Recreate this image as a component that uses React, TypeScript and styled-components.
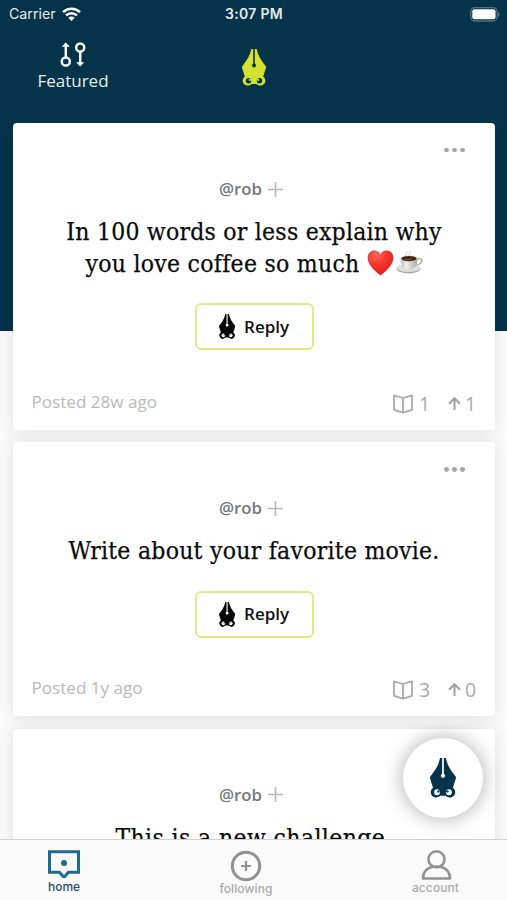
import React from 'react';
import styled, { createGlobalStyle } from 'styled-components';

const navy = '#053349';
const lime = '#d4e22f';
const sans = '"Open Sans", "Noto Sans", sans-serif';
const system = 'Inter, "Liberation Sans", sans-serif';
const slab = '"Roboto Slab", "DejaVu Serif Condensed", "DejaVu Serif", serif';

const GlobalStyle = createGlobalStyle`
  * { box-sizing: border-box; }
  body { margin: 0; background: #fafafa; }
  button { font: inherit; padding: 0; cursor: pointer; }
  svg { display: block; flex: none; }
`;

const Screen = styled.div`
  width: 507px;
  height: 900px;
  display: flex;
  flex-direction: column;
  overflow: hidden;
  position: relative;
  background: linear-gradient(${navy} 0 331px, #fbfbfb 331px);
`;

const StatusBar = styled.div`
  height: 28px;
  flex: none;
  display: grid;
  grid-template-columns: 1fr auto 1fr;
  align-items: center;
  padding: 0 7px 0 9px;
  color: #e4ebee;
  font: 400 14.2px/28px ${system};
`;

const Carrier = styled.div`
  display: flex;
  align-items: center;
  gap: 6px;
`;

const Clock = styled.div`
  font-weight: 600;
  font-size: 14px;
  letter-spacing: 0.3px;
  margin-left: -1px;
`;

const Battery = styled.svg`
  justify-self: end;
`;

const Header = styled.header`
  height: 95px;
  flex: none;
  display: grid;
  grid-template-columns: 146px 1fr 146px;
  align-items: start;
`;

const Filter = styled.button`
  display: flex;
  flex-direction: column;
  align-items: center;
  gap: 2px;
  margin-top: 14px;
  border: 0;
  background: none;
  color: #e6edf0;
  font: 400 17px/24px ${sans};
`;

const Logo = styled.div`
  display: flex;
  justify-content: center;
  padding-top: 21px;
  margin-left: 1px;
`;

const Feed = styled.main`
  flex: 1;
  min-height: 0;
  overflow: hidden;
  display: flex;
  flex-direction: column;
  gap: 12.4px;
  padding: 0 12px 0 13px;
`;

const CardBox = styled.article<{ $height: number }>`
  height: ${(p) => p.$height}px;
  flex: none;
  display: flex;
  flex-direction: column;
  align-items: center;
  background: #fff;
  border-radius: 4px;
  box-shadow: 0 0 18px rgba(0, 0, 0, 0.11);
`;

const More = styled.div`
  align-self: flex-end;
  display: flex;
  gap: 3.2px;
  height: 54px;
  padding: 24.5px 30px 0 0;
`;

const Dot = styled.i`
  width: 4.8px;
  height: 4.8px;
  border-radius: 50%;
  background: #a6a6a6;
`;

const Author = styled.div`
  display: flex;
  align-items: center;
  gap: 6px;
  height: 24px;
  margin-left: -6px;
  color: #777;
  font: 600 16.8px/24px ${sans};
`;

const Prompt = styled.h2`
  margin: 15px 0 0;
  color: #0b0b0b;
  font: 400 24.5px/31.5px ${slab};
  -webkit-text-stroke: 0.25px #0b0b0b;
  text-align: center;
  white-space: nowrap;
`;

const PromptLine = styled.span<{ $tracking: number }>`
  display: flex;
  justify-content: center;
  align-items: center;
  height: 31.5px;
  letter-spacing: ${(p) => p.$tracking}px;
`;

const Emojis = styled.span`
  display: inline-flex;
  gap: 2px;
  margin-left: 7px;
`;

const Reply = styled.button`
  display: flex;
  align-items: center;
  justify-content: center;
  gap: 9px;
  width: 119px;
  height: 47px;
  flex: none;
  margin-top: 24px;
  border: 2px solid #dfe98a;
  border-radius: 6px;
  background: #fff;
  color: #111;
  font: 600 17px/24px ${sans};
`;

const Footer = styled.footer`
  width: 100%;
  margin-top: auto;
  height: 54px;
  display: flex;
  justify-content: space-between;
  padding: 13px 19px 0 18.5px;
  color: #b9b9b9;
  font: 400 17.1px/26px ${sans};
`;

const Stats = styled.div`
  display: flex;
  align-items: center;
  height: 30px;
  font-size: 19.5px;
  color: #ababab;
`;

const Stat = styled.span<{ $gap: number; $width: number }>`
  display: flex;
  align-items: center;
  gap: ${(p) => p.$gap}px;
  width: ${(p) => p.$width}px;
`;

const Compose = styled.button`
  position: absolute;
  right: 24px;
  bottom: 82px;
  width: 80px;
  height: 80px;
  display: flex;
  align-items: center;
  justify-content: center;
  border: 0;
  border-radius: 50%;
  background: #fff;
  box-shadow: 0 0 20px rgba(0, 0, 0, 0.33);
`;

const TabBar = styled.nav`
  height: 61px;
  flex: none;
  display: grid;
  grid-template-columns: 128px 236px 1fr;
  border-top: 1.5px solid #d0d0d0;
  background: #fafafa;
  z-index: 1;
`;

const Tab = styled.a<{ $active?: boolean }>`
  display: flex;
  flex-direction: column;
  align-items: center;
  padding-top: ${(p) => (p.$active ? 10 : 10)}px;
  gap: ${(p) => (p.$active ? 0.5 : 0)}px;
  color: ${(p) => (p.$active ? '#254f66' : '#aaa')};
  font: 500 12px/14px ${system};
  letter-spacing: ${(p) => (p.$active ? -0.1 : 0.1)}px;
`;

const PenBear = ({ height, color, hole }: { height: number; color: string; hole: string }) => (
  <svg width={(height * 24) / 37} height={height} viewBox="0 0 24 37">
    <path
      fill={color}
      d="M9.3 0h5.400c1.200 6.500 4.200 11 9 17.200c.4.5.4 1.200.1 2L21.200 27.500a4.900 4.900 0 0 1-5.700 8.200L14.300 34.900H9.700L8.500 35.700a4.900 4.900 0 0 1-5.700-8.200L.2 19.200c-.3-.8-.3-1.500.1-2C5.100 11 8.100 6.500 9.300 0z"
    />
    <path stroke={hole} strokeWidth="1.600" d="M12 0v16" />
    <circle cx="12" cy="16.500" r="2" fill={hole} />
    <circle cx="6.500" cy="31.700" r="2.700" fill={hole} />
    <circle cx="17.500" cy="31.700" r="2.700" fill={hole} />
    <circle cx="7.800" cy="30.900" r="1.100" fill={color} />
    <circle cx="16.200" cy="30.900" r="1.100" fill={color} />
  </svg>
);

const Plus = () => (
  <svg width="15" height="15" viewBox="0 0 15 15" stroke="#b8b8b8" strokeWidth="1.600">
    <path d="M7.500 0v15M0 7.500h15" />
  </svg>
);

const Book = () => (
  <svg width="20" height="20" viewBox="0 0 20 20" fill="none" stroke="#aaa" strokeWidth="1.800" strokeLinejoin="round">
    <path d="M1 1.300L10 4l9-2.700v14.500L10 18.600l-9-2.800zM10 4v14.600" />
  </svg>
);

const ArrowUp = () => (
  <svg width="13" height="14" viewBox="0 0 13 14" fill="none" stroke="#a4a4a4" strokeWidth="2.100">
    <path d="M6.500 13V1.500M1 6.700L6.500 1.200 12 6.700" />
  </svg>
);

const Heart = () => (
  <svg width="27" height="26" viewBox="0 0 27 26">
    <defs>
      <radialGradient id="heart" cx=".35" cy=".2" r=".85">
        <stop offset="0" stopColor="#ff6a5c" />
        <stop offset=".45" stopColor="#f5352e" />
        <stop offset="1" stopColor="#d91a1c" />
      </radialGradient>
    </defs>
    <path
      fill="url(#heart)"
      d="M13.500 4.200C12.300 1.700 9.800.5 7.200.5 3.300.5.700 3.600.700 7.800c0 7 6.300 12.700 12.800 17.700C20 20.500 26.300 14.800 26.300 7.800c0-4.200-2.600-7.300-6.500-7.300-2.600 0-5.100 1.200-6.300 3.700z"
    />
  </svg>
);

const Coffee = () => (
  <svg width="27" height="26" viewBox="0 0 27 26">
    <defs>
      <linearGradient id="cup" x1="0" x2="1">
        <stop offset="0" stopColor="#bebbb4" />
        <stop offset=".35" stopColor="#f1efeb" />
        <stop offset="1" stopColor="#aaa8a3" />
      </linearGradient>
    </defs>
    <path d="M10 6c-2-2 2-2.500 1-5M13.500 5.500c-2-2 2.500-2.500.5-5" stroke="#e4e4e4" strokeWidth="1.600" fill="none" />
    <ellipse cx="12.500" cy="18.800" rx="12" ry="4.700" fill="#a9a7a2" />
    <ellipse cx="12.500" cy="17.900" rx="12" ry="4.200" fill="#dedcd6" />
    <path d="M20 9.500c4.500-1.800 6.500-.5 5.700 2s-4 3.500-7.700 3.500" stroke="#bbb8b0" strokeWidth="1.700" fill="none" />
    <path d="M4.500 8.500c0 6.500 3 11.200 8.500 11.200s8.500-4.700 8.500-11.200z" fill="url(#cup)" />
    <ellipse cx="13" cy="8.500" rx="8.500" ry="3.300" fill="#dcd8d0" />
    <ellipse cx="13" cy="8.700" rx="7.600" ry="2.600" fill="#42271a" />
    <ellipse cx="12.300" cy="9.600" rx="3.800" ry=".8" fill="#735039" />
  </svg>
);

type Challenge = {
  height: number;
  lines: { text: string; tracking: number; emojis?: boolean }[];
  activity?: { posted: string; replies: number; votes: number };
};

const challenges: Challenge[] = [
  {
    height: 307,
    lines: [
      { text: 'In 100 words or less explain why', tracking: 0.23 },
      { text: 'you love coffee so much', tracking: 0.27, emojis: true },
    ],
    activity: { posted: 'Posted 28w ago', replies: 1, votes: 1 },
  },
  {
    height: 274,
    lines: [{ text: 'Write about your favorite movie.', tracking: 0.25 }],
    activity: { posted: 'Posted 1y ago', replies: 3, votes: 0 },
  },
  {
    height: 274,
    lines: [{ text: 'This is a new challenge.', tracking: 0.38 }],
  },
];

const Card = ({ item }: { item: Challenge }) => (
  <CardBox $height={item.height}>
    <More>
      <Dot />
      <Dot />
      <Dot />
    </More>
    <Author>
      @rob
      <Plus />
    </Author>
    <Prompt>
      {item.lines.map((line) => (
        <PromptLine key={line.text} $tracking={line.tracking}>
          {line.text}
          {line.emojis && (
            <Emojis>
              <Heart />
              <Coffee />
            </Emojis>
          )}
        </PromptLine>
      ))}
    </Prompt>
    {item.activity && (
      <>
        <Reply>
          <PenBear height={25} color="#080808" hole="#fff" />
          Reply
        </Reply>
        <Footer>
          {item.activity.posted}
          <Stats>
            <Stat $gap={6} $width={55}>
              <Book />
              {item.activity.replies}
            </Stat>
            <Stat $gap={4} $width={28}>
              <ArrowUp />
              {item.activity.votes}
            </Stat>
          </Stats>
        </Footer>
      </>
    )}
  </CardBox>
);

export default function App() {
  return (
    <>
      <GlobalStyle />
      <Screen>
        <StatusBar>
          <Carrier>
            Carrier
            <svg width="19" height="14" viewBox="0 0 19 14" fill="none" stroke="#fff" strokeWidth="2.500">
              <path d="M1 5.200a12.200 12.200 0 0 1 17 0M4 8.400a8 8 0 0 1 11 0" />
              <path d="M6.300 10.700a4.600 4.600 0 0 1 6.400 0L9.500 14z" fill="#fff" stroke="none" />
            </svg>
          </Carrier>
          <Clock>3:07 PM</Clock>
          <Battery width="30" height="15" viewBox="0 0 30 15">
            <rect x=".7" y=".7" width="26.500" height="13.300" rx="4" fill="none" stroke="#557280" strokeWidth="1.300" />
            <rect x="2.300" y="2.300" width="23.200" height="10" rx="2" fill="#fff" />
            <path d="M28.300 5c1.800.7 1.800 4.300 0 5z" fill="#647f8d" />
          </Battery>
        </StatusBar>
        <Header>
          <Filter>
            <svg width="26" height="25" viewBox="0 0 26 26" fill="none" stroke="#fff" strokeWidth="2.500">
              <circle cx="5.500" cy="20.300" r="4.200" />
              <path d="M5.500 16V4M20.500 10V22" />
              <circle cx="20.500" cy="5.700" r="4.200" />
              <path d="M1.300 5L5.500.5 9.700 5zM16.300 21l4.200 4.500 4.200-4.500z" fill="#fff" stroke="none" />
            </svg>
            Featured
          </Filter>
          <Logo>
            <PenBear height={37} color={lime} hole={navy} />
          </Logo>
        </Header>
        <Feed>
          {challenges.map((item, i) => (
            <Card key={i} item={item} />
          ))}
        </Feed>
        <Compose aria-label="Write">
          <PenBear height={40} color={navy} hole="#fff" />
        </Compose>
        <TabBar>
          <Tab $active>
            <svg width="32" height="29" viewBox="0 0 32 29" fill="none" stroke="#1e6b92" strokeWidth="3">
              <path d="M1.500 1.800h29v20.400H20.500L16.800 26.500h-1.600l-3.700-4.300H1.500z" />
              <circle cx="16" cy="13" r="3" fill="#1e6b92" stroke="none" />
            </svg>
            home
          </Tab>
          <Tab>
            <svg width="32" height="32" viewBox="0 0 32 32" fill="none" stroke="#929292" strokeWidth="3">
              <circle cx="16" cy="16" r="13.700" />
              <path d="M16 11v10M11 16h10" strokeWidth="2.200" />
            </svg>
            following
          </Tab>
          <Tab>
            <svg width="32" height="31" viewBox="0 0 32 31" fill="none" stroke="#929292" strokeWidth="2.600">
              <circle cx="16.500" cy="9.300" r="8" />
              <path d="M9.200 18C5 20 3 23.500 3 28.500h27c0-5-2-8.500-6.200-10.500Q16.500 15 9.200 18z" strokeLinejoin="round" />
            </svg>
            account
          </Tab>
        </TabBar>
      </Screen>
    </>
  );
}
